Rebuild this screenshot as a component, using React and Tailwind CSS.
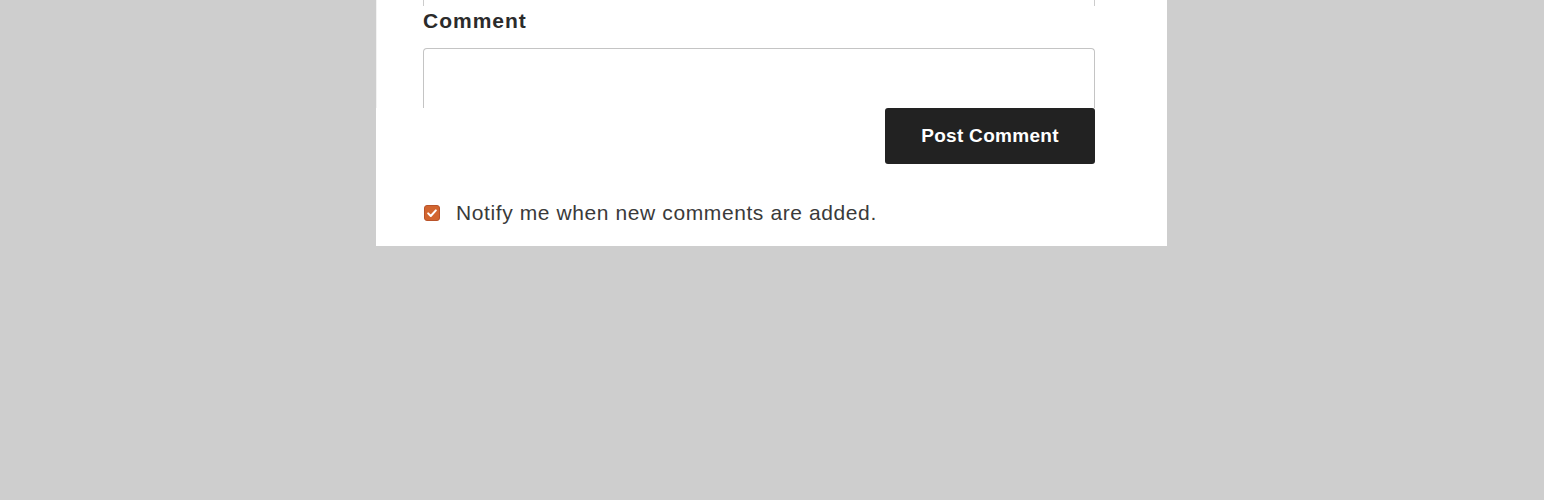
import React from 'react'

const Checkbox = () => (
  <span className="flex h-4 w-4 items-center justify-center rounded-[3px] border border-[#b9532a] bg-[#d2652f]">
    <svg viewBox="0 0 16 16" className="h-4 w-4" fill="none">
      <path d="M3.6 8.4l3 3L12.4 5" stroke="white" strokeWidth="2.3" strokeLinecap="round" strokeLinejoin="round" />
    </svg>
  </span>
)

export default function App() {
  return (
    <div className="min-h-[500px] bg-[#cecece] font-['Liberation_Sans',Arial,sans-serif]">
      <div className="ml-[376px] w-[791px] bg-white pl-[46px] pr-[72px] h-[246px]">
        {/* top part, clipped textarea */}
        <div className="h-[108px] -ml-[46px] pl-[46px] border-l border-[#f2f2f2]">
          <div className="h-[6px] border-x border-[#cccccc]" />
          <label className="block pt-[3px] text-[21px] font-bold leading-[24px] tracking-[1px] text-[#2b2b2b]">
            Comment
          </label>
          <div className="mt-[15px] h-[60px] rounded-t-[4px] border-x border-t border-[#c4c4c4]" />
        </div>

        <div className="flex justify-end">
          <button className="h-[56px] w-[210px] rounded-[3px] bg-[#222222] text-[19px] font-bold text-white tracking-[0.3px]">
            Post Comment
          </button>
        </div>

        <div className="mt-[37px] flex items-center">
          <span className="ml-[2px]">
            <Checkbox />
          </span>
          <span className="ml-[16px] text-[21px] leading-[24px] tracking-[0.6px] text-[#3a3a3a]">
            Notify me when new comments are added.
          </span>
        </div>
      </div>
    </div>
  )
}
